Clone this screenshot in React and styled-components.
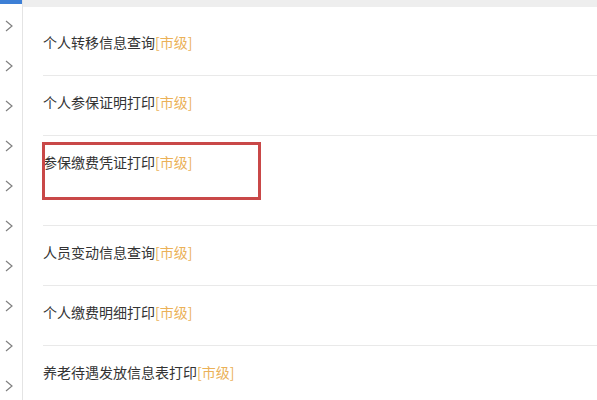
import styled, { createGlobalStyle } from "styled-components";

const GlobalStyle = createGlobalStyle`
  html, body {
    margin: 0;
    padding: 0;
    background: #fff;
  }
  body {
    font-family: "Noto Sans CJK SC", "Noto Sans", sans-serif;
  }
`;

const Page = styled.div`
  display: flex;
  width: 597px;
  height: 400px;
  overflow: hidden;
  background: #fff;
`;

const Sidebar = styled.aside`
  position: relative;
  width: 22px;
  flex-shrink: 0;
  border-right: 1px solid #e4e4e4;
  padding-top: 6px;
  display: flex;
  flex-direction: column;

  &::before {
    content: "";
    position: absolute;
    top: 0;
    left: 0;
    width: 22px;
    height: 4px;
    background: #3d7fd6;
  }
`;

const SideItem = styled.div`
  height: 40px;
  flex-shrink: 0;
  display: flex;
  align-items: center;
  padding-left: 5px;
`;

const Main = styled.main`
  flex: 1;
  display: flex;
  flex-direction: column;
`;

const TopBar = styled.div`
  height: 7px;
  background: #eeeeee;
  flex-shrink: 0;
`;

const List = styled.ul`
  list-style: none;
  margin: 0;
  padding: 9px 0 0 20px;
`;

const Row = styled.li`
  position: relative;
  box-sizing: border-box;
  height: ${(p) => (p.$tall ? 90 : 60)}px;
  padding-top: 16px;
  border-bottom: 1px solid #e9e9e9;
  font-size: 14px;
  line-height: 20px;
  color: #333;
`;

const Level = styled.span`
  color: #ebb158;
`;

const Highlight = styled.div`
  position: absolute;
  top: 6px;
  left: -1px;
  width: 219px;
  height: 58px;
  box-sizing: border-box;
  border: 3px solid #c94848;
`;

const Chevron = () => (
  <svg width="8" height="12" viewBox="0 0 8 12">
    <polyline points="1,1 7,6 1,11" fill="none" stroke="#808080" strokeWidth="1.2" />
  </svg>
);

const items = [
  { name: "个人转移信息查询" },
  { name: "个人参保证明打印" },
  { name: "参保缴费凭证打印", tall: true, marked: true },
  { name: "人员变动信息查询" },
  { name: "个人缴费明细打印" },
  { name: "养老待遇发放信息表打印" },
];

export default function App() {
  return (
    <>
      <GlobalStyle />
      <Page>
        <Sidebar>
          {Array.from({ length: 10 }).map((_, i) => (
            <SideItem key={i}>
              <Chevron />
            </SideItem>
          ))}
        </Sidebar>
        <Main>
          <TopBar />
          <List>
            {items.map((it) => (
              <Row key={it.name} $tall={it.tall}>
                {it.name}
                <Level>[市级]</Level>
                {it.marked && <Highlight />}
              </Row>
            ))}
          </List>
        </Main>
      </Page>
    </>
  );
}
